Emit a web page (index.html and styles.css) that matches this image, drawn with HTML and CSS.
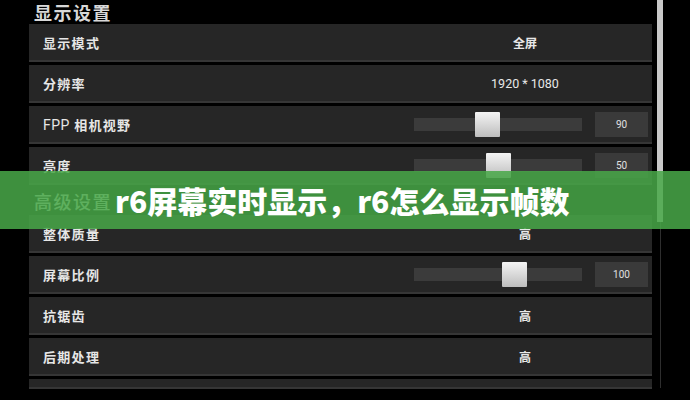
FILE: index.html
```html
<!DOCTYPE html>
<html lang="zh">
<head>
<meta charset="utf-8">
<link rel="stylesheet" href="styles.css">
</head>
<body>
<div class="page">
  <div class="panel">
    <div class="title">显示设置</div>
    <div class="row"><span class="label">显示模式</span><div class="right"><span class="value bold">全屏</span></div></div>
    <div class="row"><span class="label">分辨率</span><div class="right"><span class="value num">1920 * 1080</span></div></div>
    <div class="row"><span class="label"><span class="latin">FPP</span> 相机视野</span><div class="right"><div class="track"><div class="thumb" style="left:61px"></div></div><div class="box">90</div></div></div>
    <div class="row"><span class="label">亮度</span><div class="right"><div class="track"><div class="thumb" style="left:72px"></div></div><div class="box">50</div></div></div>
    <div class="section">高级设置</div>
    <div class="row"><span class="label">整体质量</span><div class="right"><span class="value bold">高</span></div></div>
    <div class="row"><span class="label">屏幕比例</span><div class="right"><div class="track"><div class="thumb" style="left:88px"></div></div><div class="box">100</div></div></div>
    <div class="row"><span class="label">抗锯齿</span><div class="right"><span class="value bold">高</span></div></div>
    <div class="row"><span class="label">后期处理</span><div class="right"><span class="value bold">高</span></div></div>
    <div class="row last"></div>
  </div>
  <div class="scrollbar"><div class="scroll-thumb"></div></div>
  <div class="banner">r6屏幕实时显示，r6怎么显示帧数</div>
</div>
</body>
</html>
```
FILE: styles.css
```css
html, body {
  margin: 0;
  padding: 0;
  background: #000;
}
body {
  width: 690px;
  height: 400px;
  overflow: hidden;
  font-family: "Noto Sans CJK SC", "Noto Sans", sans-serif;
}
.page {
  position: relative;
  width: 690px;
  height: 400px;
}
.panel {
  margin-left: 29px;
  width: 623px;
  display: flex;
  flex-direction: column;
}
.title {
  height: 24px;
  line-height: 24px;
  padding-left: 5px;
  font-size: 18px;
  font-weight: 700;
  color: #d8d8d8;
  letter-spacing: 1.5px;
}
.row {
  height: 36px;
  flex: none;
  margin-bottom: 3px;
  background: #262626;
  border-bottom: 2px solid #363636;
  display: flex;
  align-items: center;
  padding-left: 14px;
}
.row.last {
  height: 8px;
}
.label {
  flex: 1;
  font-size: 13px;
  font-weight: 700;
  color: #e6e6e6;
  letter-spacing: 1.3px;
}
.latin {
  font-family: "Roboto", sans-serif;
  font-weight: 400;
  font-size: 14px;
  letter-spacing: 0.5px;
}
.right {
  width: 238px;
  display: flex;
  align-items: center;
}
.value {
  width: 222px;
  text-align: center;
  color: #e8e8e8;
  font-size: 12px;
}
.value.bold {
  font-weight: 700;
}
.value.num {
  font-family: "Roboto", sans-serif;
  font-size: 12.5px;
}
.track {
  position: relative;
  width: 168px;
  height: 13px;
  background: #3b3b3b;
}
.thumb {
  position: absolute;
  top: -6px;
  width: 25px;
  height: 25px;
  background: linear-gradient(#f4f4f4, #bdbdbd);
  border-radius: 1px;
}
.box {
  margin-left: 13px;
  width: 53px;
  height: 25px;
  background: #3a3a3a;
  color: #e0e0e0;
  font-family: "Roboto", sans-serif;
  font-size: 10px;
  line-height: 25px;
  text-align: center;
}
.section {
  height: 27px;
  line-height: 27px;
  padding-left: 5px;
  font-size: 18px;
  font-weight: 500;
  color: #e2e2e2;
  letter-spacing: 1.5px;
}
.scrollbar {
  position: absolute;
  top: 0;
  left: 657px;
  width: 6px;
  height: 400px;
}
.scrollbar::before {
  content: "";
  position: absolute;
  left: 3px;
  top: 0;
  width: 1px;
  height: 388px;
  background: #2e2e2e;
}
.scroll-thumb {
  position: relative;
  width: 6px;
  height: 222px;
  background: #c9c9c9;
}
.banner {
  position: absolute;
  left: 0;
  top: 171px;
  width: 690px;
  height: 58px;
  line-height: 58px;
  box-sizing: border-box;
  padding-left: 115px;
  background: rgba(72, 168, 72, 0.86);
  color: #fff;
  font-size: 30px;
  font-weight: 900;
  white-space: nowrap;
}
```
